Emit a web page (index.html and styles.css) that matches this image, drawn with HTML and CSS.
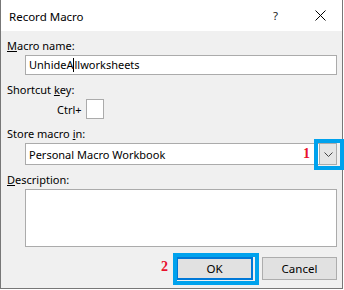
FILE: index.html
```html
<!DOCTYPE html>
<html lang="en">
<head>
    <meta charset="UTF-8">
    <title>Record Macro</title>
    <link rel="stylesheet" href="styles.css">
</head>
<body>
    <div class="window">
        <!-- Title bar -->
        <div class="titlebar">
            <span class="title">Record Macro</span>
            <span class="help">?</span>
            <svg class="close" width="11" height="11" viewBox="0 0 11 11">
                <path d="M0.5 0.5 L10.5 10.5 M10.5 0.5 L0.5 10.5" stroke="#000" stroke-width="1" fill="none"/>
            </svg>
        </div>

        <!-- Dialog body -->
        <div class="content">
            <label class="label first"><u>M</u>acro name:</label>
            <div class="field text">UnhideA<span class="caret"></span>llworksheets</div>

            <label class="label">Shortcut <u>k</u>ey:</label>
            <div class="shortcut">
                <span>Ctrl+</span>
                <div class="keybox"></div>
            </div>

            <label class="label">Store macro <u>i</u>n:</label>
            <div class="field select">
                <span class="value">Personal Macro Workbook</span>
                <span class="arrow">
                    <svg width="9" height="5" viewBox="0 0 9 5">
                        <path d="M0.5 0.5 L4.5 4.5 L8.5 0.5" stroke="#444" stroke-width="1" fill="none"/>
                    </svg>
                </span>
            </div>

            <label class="label"><u>D</u>escription:</label>
            <div class="field area"></div>

            <div class="buttons">
                <button class="btn ok">OK</button>
                <button class="btn">Cancel</button>
            </div>
        </div>

        <!-- Annotations -->
        <span class="num num1">1</span>
        <div class="mark mark1"></div>
        <span class="num num2">2</span>
        <div class="mark mark2"></div>
    </div>
</body>
</html>
```

FILE: styles.css
```css
* {
    margin: 0;
    padding: 0;
    box-sizing: border-box;
}

body {
    font-family: "Noto Sans", "Open Sans", sans-serif;
    font-size: 11px;
    color: #000;
    background-color: #fff;
}

.window {
    position: relative;
    width: 343px;
    height: 289px;
    border: 1px solid #777;
    border-top: none;
    background-color: #f0f0f0;
    display: flex;
    flex-direction: column;
}

.titlebar {
    height: 31px;
    background-color: #fff;
    display: flex;
    align-items: center;
    padding-left: 8px;
}

.title {
    flex: 1;
    font-size: 11.5px;
    padding-top: 2px;
}

.help {
    font-size: 11.5px;
    margin-right: 37px;
    color: #222;
}

.close {
    margin-right: 16px;
}

.content {
    display: flex;
    flex-direction: column;
    padding: 0 5px 0 6px;
}

.label {
    display: block;
    height: 16px;
    line-height: 16px;
    margin-top: 7px;
}

.label.first {
    margin-top: 7px;
}

.field {
    margin-top: 1px;
    margin-left: 18px;
    background-color: #fff;
    border: 1px solid #ababab;
}

.text {
    height: 20px;
    line-height: 18px;
    padding-left: 3px;
}

.caret {
    display: inline-block;
    width: 1px;
    height: 14px;
    background-color: #000;
    vertical-align: -3px;
}

.shortcut {
    display: flex;
    align-items: center;
    margin-top: 1px;
    padding-left: 50px;
    gap: 4px;
}

.keybox {
    width: 18px;
    height: 20px;
    background-color: #fff;
    border: 1px solid #ababab;
}

.select {
    height: 22px;
    display: flex;
    align-items: center;
    padding-left: 3px;
}

.select .value {
    flex: 1;
}

.arrow {
    width: 18px;
    height: 22px;
    margin: -1px -1px -1px 0;
    background-color: #e5e5e5;
    border: 1px solid #ababab;
    display: flex;
    align-items: center;
    justify-content: center;
}

.area {
    height: 58px;
}

.buttons {
    display: flex;
    justify-content: flex-end;
    gap: 9px;
    margin-top: 10px;
}

.btn {
    width: 75px;
    height: 23px;
    font-family: inherit;
    font-size: 11.5px;
    background-color: #e1e1e1;
    border: 1px solid #adadad;
}

.btn.ok {
    width: 77px;
    border: 2px solid #0078d7;
}

.num {
    position: absolute;
    font-family: "Liberation Serif", serif;
    font-weight: bold;
    font-size: 14px;
    color: #e8112d;
}

.num1 {
    left: 302px;
    top: 146px;
}

.num2 {
    left: 160px;
    top: 259px;
}

.mark {
    position: absolute;
    border: 4px solid #00a2ed;
}

.mark1 {
    left: 313px;
    top: 139px;
    width: 30px;
    height: 31px;
}

.mark2 {
    left: 172px;
    top: 253px;
    width: 86px;
    height: 32px;
}
```
